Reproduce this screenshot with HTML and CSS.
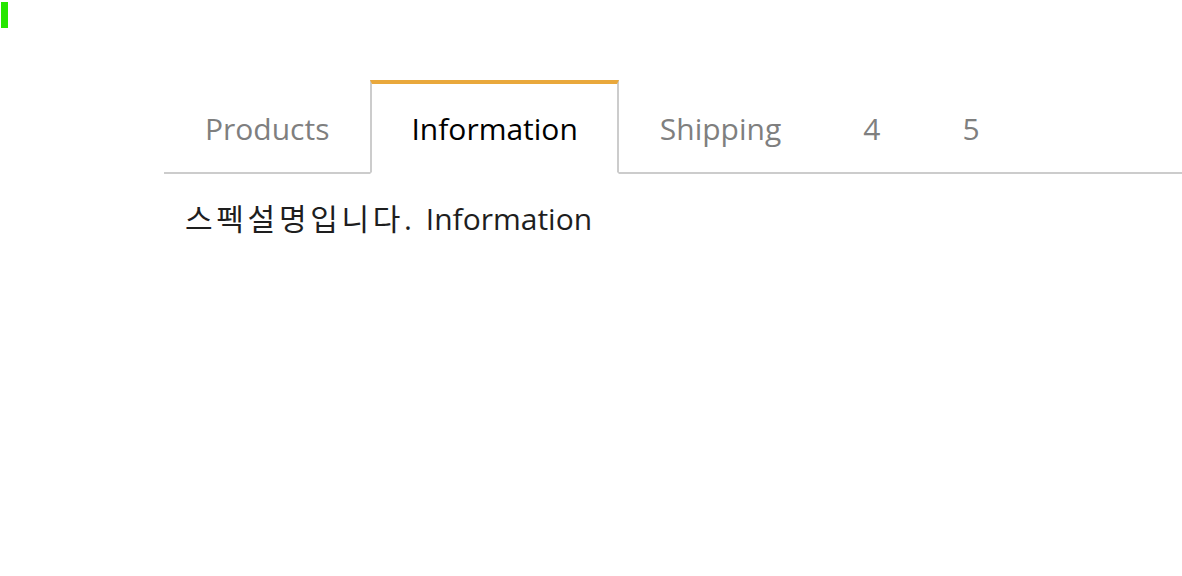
FILE: index.html
```html
<!DOCTYPE html>
<html lang="ko">
<head>
<meta charset="utf-8">
<title>Tabs</title>
<link rel="stylesheet" href="styles.css">
</head>
<body>
<div class="marker"></div>
<div class="page">
  <ul class="tabs">
    <li class="tab">Products</li>
    <li class="tab active">Information</li>
    <li class="tab">Shipping</li>
    <li class="tab">4</li>
    <li class="tab">5</li>
  </ul>
  <div class="panel"><span class="ko">스펙설명입니다</span>. Information</div>
</div>
</body>
</html>
```

FILE: styles.css
```css
html, body {
  margin: 0;
  padding: 0;
  background: #fff;
}
body {
  font-family: "Open Sans", "Noto Sans CJK KR", sans-serif;
}
.marker {
  width: 7px;
  height: 26px;
  margin: 2px 0 0 1px;
  background: #26e600;
}
.page {
  padding-left: 164px;
  margin-top: 52px;
}
.tabs {
  display: flex;
  list-style: none;
  margin: 0;
  padding: 0;
  border-bottom: 2px solid #cccccc;
}
.tab {
  display: flex;
  align-items: center;
  height: 88px;
  padding: 0 39px;
  margin-bottom: -2px;
  border: 2px solid transparent;
  border-top-width: 4px;
  font-size: 30px;
  color: #7f7f7f;
}
.tab.active {
  border-color: #cccccc;
  border-top-color: #e9a83c;
  border-bottom-color: #ffffff;
  color: #000000;
}
.panel {
  padding: 22px 21px;
  font-size: 30px;
  line-height: 45px;
  color: #1e1e1e;
  word-spacing: 6px;
}
.ko {
  letter-spacing: 3.7px;
}
```
